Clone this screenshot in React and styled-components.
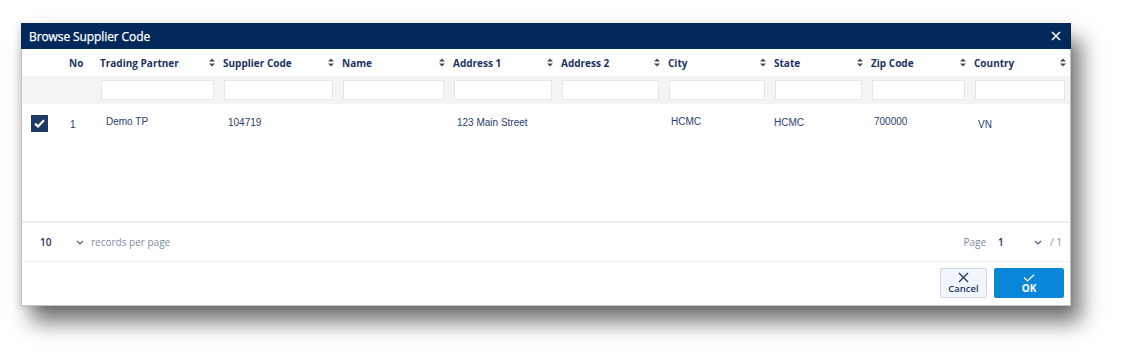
import React from 'react';
import styled, { createGlobalStyle } from 'styled-components';

const GlobalStyle = createGlobalStyle`
  body {
    margin: 0;
    background: #ffffff;
    font-family: "Open Sans", "Liberation Sans", sans-serif;
  }
`;

const Page = styled.div`
  width: 1126px;
  height: 362px;
  padding: 23px 0 0 21px;
  box-sizing: border-box;
`;

const Dialog = styled.div`
  width: 1050px;
  height: 283px;
  box-sizing: border-box;
  border: 1px solid #c4c4c4;
  border-top: none;
  background: #fff;
  display: flex;
  flex-direction: column;
  box-shadow: 10px 16px 20px rgba(0, 0, 0, 0.55), -2px 2px 6px rgba(0, 0, 0, 0.12);
`;

const TitleBar = styled.div`
  height: 26px;
  margin: 0 -1px;
  background: #02295a;
  color: #fff;
  display: flex;
  align-items: center;
  justify-content: space-between;
  padding: 0 9px 0 8px;
  font-size: 12px;
  font-weight: 400;
  letter-spacing: -0.1px;
  -webkit-text-stroke: 0.25px #fff;
`;

const CloseButton = styled.button`
  background: none;
  border: none;
  padding: 0;
  width: 12px;
  height: 12px;
  display: flex;
  cursor: pointer;
`;

const Body = styled.div`
  height: 172px;
  overflow: hidden;
  border-bottom: 2px solid #eeeeee;
`;

const Table = styled.table`
  width: 1048px;
  border-collapse: collapse;
  table-layout: fixed;
`;

const HeadCell = styled.th`
  height: 27px;
  padding: 0 4px 0 ${(p) => p.$pad ?? 4}px;
  text-align: left;
  font-size: 10px;
  font-weight: 700;
  color: #1b3461;
  white-space: nowrap;
`;

const HeadInner = styled.div`
  display: flex;
  align-items: center;
  justify-content: space-between;
`;

const FilterRow = styled.tr`
  background: #f4f4f4;
`;

const FilterCell = styled.td`
  height: 28px;
  padding: 0 5px;
`;

const FilterInput = styled.input`
  display: block;
  width: 100%;
  height: 20px;
  box-sizing: border-box;
  border: 1px solid #e6e6e6;
  background: #fff;
  outline: none;
`;

const DataCell = styled.td`
  height: 38px;
  padding: 0 0 0 ${(p) => p.$pad}px;
  vertical-align: top;
  padding-top: ${(p) => p.$top}px;
  font-family: "Liberation Sans", Arial, sans-serif;
  font-size: 10px;
  color: #2a4070;
`;

const CheckBox = styled.span`
  display: inline-flex;
  width: 17px;
  height: 17px;
  background: #1e3a66;
  align-items: center;
  justify-content: center;
  margin: 11px 0 0 9px;
`;

const Pager = styled.div`
  height: 38px;
  display: flex;
  align-items: center;
  justify-content: space-between;
  padding: 0 8px 0 18px;
  border-bottom: 1px solid #eeeeee;
  font-size: 10px;
`;

const PagerGroup = styled.div`
  display: flex;
  align-items: center;
`;

const PageNum = styled.span`
  color: #1b3461;
  font-weight: 600;
  width: ${(p) => p.$w}px;
`;

const Muted = styled.span`
  color: #7d8ba6;
  margin: ${(p) => p.$m || '0'};
`;

const Chevron = styled.svg`
  width: 8px;
  height: 5px;
  margin: ${(p) => p.$m};
`;

const Actions = styled.div`
  flex: 1;
  display: flex;
  justify-content: flex-end;
  align-items: flex-start;
  gap: 7px;
  padding: 6px 6px 0 0;
`;

const ActionButton = styled.button`
  width: ${(p) => p.$w}px;
  height: 30px;
  box-sizing: border-box;
  display: flex;
  flex-direction: column;
  align-items: center;
  justify-content: center;
  gap: 1px;
  border-radius: 2px;
  border: 1px solid ${(p) => (p.$primary ? '#0a86d8' : '#cfd8e4')};
  background: ${(p) => (p.$primary ? '#0a86d8' : '#f1f6fd')};
  color: ${(p) => (p.$primary ? '#fff' : '#1b3461')};
  font-family: "Open Sans", sans-serif;
  font-size: ${(p) => (p.$primary ? '10px' : '9.5px')};
  font-weight: ${(p) => (p.$primary ? 700 : 600)};
  padding: 0;
  line-height: 1;
  cursor: pointer;
`;

const SortIcon = () => (
  <svg width="6" height="9" viewBox="0 0 6 9">
    <path d="M0 3.6L3 0.4L6 3.6Z M0 5.4L3 8.6L6 5.4Z" fill="#4a4a4a" />
  </svg>
);

const columns = [
  { label: 'Trading Partner', value: 'Demo TP', pad: 10, top: 12 },
  { label: 'Supplier Code', value: '104719', pad: 9, top: 13 },
  { label: 'Name', value: '', pad: 8, top: 13 },
  { label: 'Address 1', value: '123 Main Street', pad: 8, top: 13 },
  { label: 'Address 2', value: '', pad: 8, top: 13 },
  { label: 'City', value: 'HCMC', pad: 7, top: 12 },
  { label: 'State', value: 'HCMC', pad: 4, top: 13 },
  { label: 'Zip Code', value: '700000', pad: 7, top: 12 },
  { label: 'Country', value: 'VN', pad: 8, top: 15 },
];

const widths = [38, 36, 123, 119, 111, 108, 107, 106, 97, 103, 100];

const App = () => (
  <>
    <GlobalStyle />
    <Page>
      <Dialog>
        <TitleBar>
          Browse Supplier Code
          <CloseButton>
            <svg width="12" height="12" viewBox="0 0 12 12">
              <path d="M2 2L10 10M10 2L2 10" stroke="#fff" strokeWidth="1.6" />
            </svg>
          </CloseButton>
        </TitleBar>
        <Body>
          <Table>
            <colgroup>
              {widths.map((w, i) => (
                <col key={i} style={{ width: w }} />
              ))}
            </colgroup>
            <thead>
              <tr>
                <HeadCell />
                <HeadCell $pad={9}>No</HeadCell>
                {columns.map((c) => (
                  <HeadCell key={c.label}>
                    <HeadInner>
                      {c.label}
                      <SortIcon />
                    </HeadInner>
                  </HeadCell>
                ))}
              </tr>
              <FilterRow>
                <FilterCell />
                <FilterCell />
                {columns.map((c) => (
                  <FilterCell key={c.label}>
                    <FilterInput />
                  </FilterCell>
                ))}
              </FilterRow>
            </thead>
            <tbody>
              <tr>
                <DataCell $pad={0} $top={0}>
                  <CheckBox>
                    <svg width="11" height="9" viewBox="0 0 11 9">
                      <path d="M1 4.6L4 7.4L10 1.2" stroke="#fff" strokeWidth="2.2" fill="none" />
                    </svg>
                  </CheckBox>
                </DataCell>
                <DataCell $pad={10} $top={15}>1</DataCell>
                {columns.map((c) => (
                  <DataCell key={c.label} $pad={c.pad} $top={c.top}>
                    {c.value}
                  </DataCell>
                ))}
              </tr>
            </tbody>
          </Table>
        </Body>
        <Pager>
          <PagerGroup>
            <PageNum $w={36}>10</PageNum>
            <Chevron $m="0 7px 0 0" viewBox="0 0 8 5">
              <path d="M1 1L4 4L7 1" stroke="#4a5a78" strokeWidth="1.1" fill="none" />
            </Chevron>
            <Muted>records per page</Muted>
          </PagerGroup>
          <PagerGroup>
            <Muted $m="0 12px 0 0">Page</Muted>
            <PageNum $w={36}>1</PageNum>
            <Chevron $m="0 8px 0 0" viewBox="0 0 8 5">
              <path d="M1 1L4 4L7 1" stroke="#4a5a78" strokeWidth="1.1" fill="none" />
            </Chevron>
            <Muted>/ 1</Muted>
          </PagerGroup>
        </Pager>
        <Actions>
          <ActionButton $w={47}>
            <svg width="11" height="11" viewBox="0 0 11 11">
              <path d="M1 1L10 10M10 1L1 10" stroke="#1b3461" strokeWidth="1.3" />
            </svg>
            Cancel
          </ActionButton>
          <ActionButton $w={70} $primary>
            <svg width="12" height="8" viewBox="0 0 12 8">
              <path d="M1 3.5L4.5 7L11 0.8" stroke="#fff" strokeWidth="1.2" fill="none" />
            </svg>
            OK
          </ActionButton>
        </Actions>
      </Dialog>
    </Page>
  </>
);

export default App;
